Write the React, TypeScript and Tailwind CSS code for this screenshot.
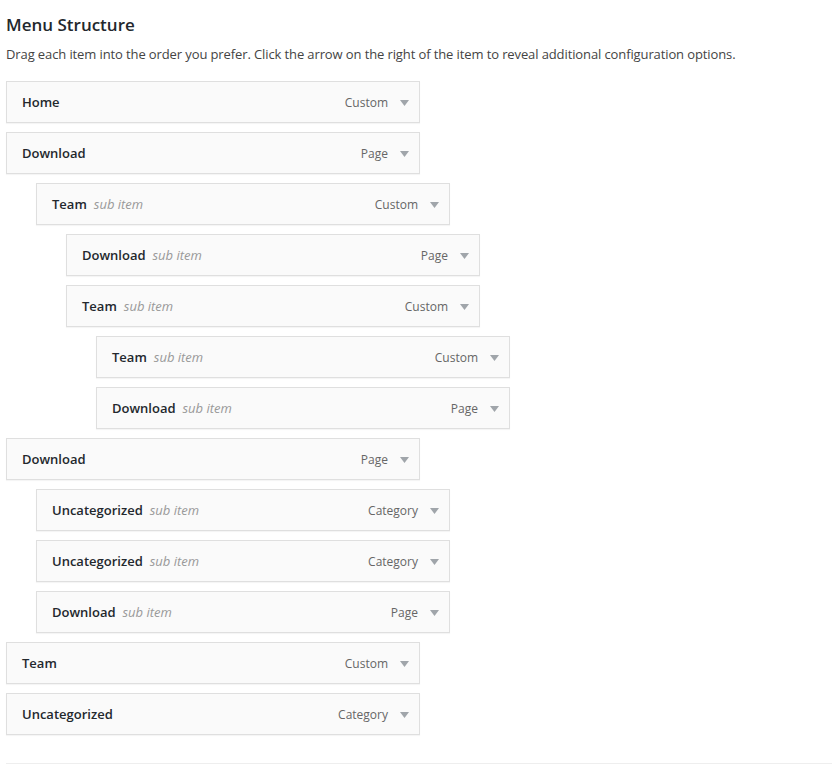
import React from "react";

type Item = { title: string; type: string; depth: number; sub?: boolean };

const items: Item[] = [
  { title: "Home", type: "Custom", depth: 0 },
  { title: "Download", type: "Page", depth: 0 },
  { title: "Team", type: "Custom", depth: 1, sub: true },
  { title: "Download", type: "Page", depth: 2, sub: true },
  { title: "Team", type: "Custom", depth: 2, sub: true },
  { title: "Team", type: "Custom", depth: 3, sub: true },
  { title: "Download", type: "Page", depth: 3, sub: true },
  { title: "Download", type: "Page", depth: 0 },
  { title: "Uncategorized", type: "Category", depth: 1, sub: true },
  { title: "Uncategorized", type: "Category", depth: 1, sub: true },
  { title: "Download", type: "Page", depth: 1, sub: true },
  { title: "Team", type: "Custom", depth: 0 },
  { title: "Uncategorized", type: "Category", depth: 0 },
];

const indent = ["ml-0", "ml-[30px]", "ml-[60px]", "ml-[90px]"];

function Caret() {
  return (
    <svg width="9" height="6" viewBox="0 0 9 6" className="block">
      <path d="M0 0 H9 L4.5 6 Z" fill="#a0a5aa" />
    </svg>
  );
}

export default function App() {
  return (
    <div
      className="min-h-[768px] bg-white text-[13px] text-[#444]"
      style={{ fontFamily: '"Open Sans", "Noto Sans", sans-serif' }}
    >
      <div className="pl-[6px]">
        <h3 className="pt-[13px] text-[17px] leading-[24px] font-semibold text-[#23282d]">
          Menu Structure
        </h3>
        <p className="mt-[7px] leading-[20px] text-[13px] tracking-[-0.11px] text-[#444]">
          Drag each item into the order you prefer. Click the arrow on the right of the item to reveal additional configuration options.
        </p>
        <ul className="mt-[17px] flex flex-col gap-[9px]">
          {items.map((it, i) => (
            <li key={i} className={indent[it.depth]}>
              <div className="flex h-[42px] w-[414px] items-center border border-[#dfdfdf] bg-[#fafafa] pt-[2px] pl-[15px] pr-[10px] shadow-[0_1px_1px_rgba(0,0,0,0.04)]">
                <span className="font-semibold text-[#23282d]">{it.title}</span>
                {it.sub && (
                  <span className="ml-[7px] italic text-[#999]">sub item</span>
                )}
                <span className="ml-auto text-[12px] text-[#666]">{it.type}</span>
                <span className="ml-[12px]">
                  <Caret />
                </span>
              </div>
            </li>
          ))}
        </ul>
        <div className="mt-[28px] h-px bg-[#eee]" />
      </div>
    </div>
  );
}
